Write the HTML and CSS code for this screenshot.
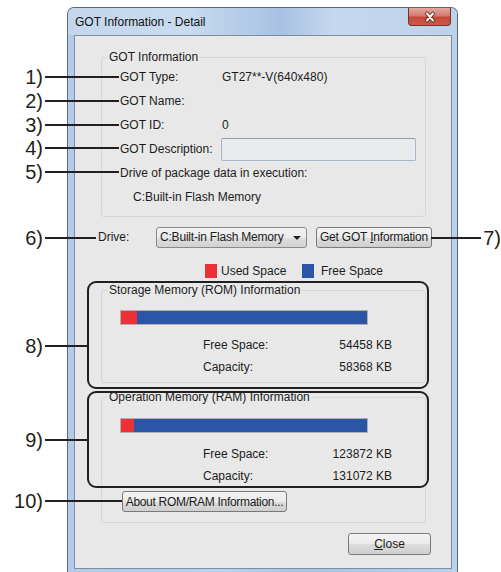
FILE: index.html
```html
<!DOCTYPE html>
<html lang="en">
<head>
    <meta charset="UTF-8">
    <title>GOT Information - Detail</title>
    <link rel="stylesheet" href="styles.css">
</head>
<body>
    <div class="window">
        <div class="titlebar">
            <span class="title">GOT Information - Detail</span>
            <span class="close-btn">
                <svg width="14" height="12" viewBox="0 0 14 12">
                    <path d="M4 2.5 L10 9.5 M10 2.5 L4 9.5" stroke="#5a2320" stroke-width="3.6" stroke-linecap="round"/>
                    <path d="M4 2.5 L10 9.5 M10 2.5 L4 9.5" stroke="#ffffff" stroke-width="2" stroke-linecap="round"/>
                </svg>
            </span>
        </div>
        <div class="client">
            <fieldset class="group">
                <legend>GOT Information</legend>
                <div class="group-body info">
                    <div class="row"><span class="key">GOT Type:</span><span>GT27**-V(640x480)</span></div>
                    <div class="row"><span class="key">GOT Name:</span></div>
                    <div class="row"><span class="key">GOT ID:</span><span>0</span></div>
                    <div class="row"><span class="key">GOT Description:</span><span class="textbox"></span></div>
                    <div class="row">Drive of package data in execution:</div>
                    <div class="row indent">C:Built-in Flash Memory</div>
                </div>
            </fieldset>

            <div class="drive-row">
                <span class="drive-label">Drive:</span>
                <span class="combo">C:Built-in Flash Memory<span class="arrow"></span></span>
                <button class="btn get-btn">Get GOT <u>I</u>nformation</button>
            </div>

            <div class="key-row">
                <span class="swatch used"></span><span class="key-text">Used Space</span>
                <span class="swatch free"></span><span>Free Space</span>
            </div>

            <fieldset class="group mem">
                <legend>Storage Memory (ROM) Information</legend>
                <div class="group-body rom">
                    <div class="bar"><div class="bar-used" style="width: 6.6%"></div></div>
                    <div class="mem-info">
                        <span>Free Space:</span><span class="num">54458 KB</span>
                        <span>Capacity:</span><span class="num">58368 KB</span>
                    </div>
                </div>
            </fieldset>

            <fieldset class="group mem ram-group">
                <legend>Operation Memory (RAM) Information</legend>
                <div class="group-body ram">
                    <div class="bar"><div class="bar-used" style="width: 5.3%"></div></div>
                    <div class="mem-info">
                        <span>Free Space:</span><span class="num">123872 KB</span>
                        <span>Capacity:</span><span class="num">131072 KB</span>
                    </div>
                    <button class="btn about-btn">About ROM/RAM Information...</button>
                </div>
            </fieldset>

            <div class="footer">
                <button class="btn close-dlg"><u>C</u>lose</button>
            </div>
        </div>
    </div>

    <!-- callouts drawn over the screenshot -->
    <div class="annot">
        <div class="ring ring-rom"></div>
        <div class="ring ring-ram"></div>

        <div class="callout c1"><span class="num-label">1)</span><span class="line"></span></div>
        <div class="callout c2"><span class="num-label">2)</span><span class="line"></span></div>
        <div class="callout c3"><span class="num-label">3)</span><span class="line"></span></div>
        <div class="callout c4"><span class="num-label">4)</span><span class="line"></span></div>
        <div class="callout c5"><span class="num-label">5)</span><span class="line"></span></div>
        <div class="callout c6"><span class="num-label">6)</span><span class="line"></span></div>
        <div class="callout c8"><span class="num-label">8)</span><span class="line"></span></div>
        <div class="callout c9"><span class="num-label">9)</span><span class="line"></span></div>
        <div class="callout c10"><span class="num-label">10)</span><span class="line"></span></div>
        <div class="callout c7"><span class="line"></span><span class="num-label">7)</span></div>
    </div>
</body>
</html>
```

FILE: styles.css
```css
html, body {
    margin: 0;
    padding: 0;
    overflow: hidden;
}
body {
    position: relative;
    width: 501px;
    height: 572px;
    background-color: #ffffff;
    font-family: "Liberation Sans", Arial, sans-serif;
    font-size: 12px;
    color: #1c1c1c;
}

/* window frame */
.window {
    margin: 7px 0 0 67px;
    width: 391px;
    height: 565px;
    box-sizing: border-box;
    border: 1px solid #56687e;
    border-bottom: none;
    border-radius: 7px 7px 0 0;
    padding: 0 5px 3px 6px;
    background: linear-gradient(90deg, #b3cbe8 0%, #bcd2ec 40%, #a9c3e2 60%, #bcd1ea 100%);
    display: flex;
    flex-direction: column;
}
.titlebar {
    height: 27px;
    flex-shrink: 0;
    display: flex;
    justify-content: space-between;
    align-items: flex-start;
    background: linear-gradient(90deg, #c3d6ec 0%, #c9dbef 30%, #b0c9e6 48%, #a7c1e1 55%, #c6d8ee 68%, #bcd1ea 100%);
    margin: 0 -5px 0 -6px;
    padding: 0 6px 0 7px;
    border-radius: 6px 6px 0 0;
}
.title {
    line-height: 28px;
    color: #101010;
}
.close-btn {
    width: 43px;
    height: 18px;
    box-sizing: border-box;
    border: 1px solid #7a302a;
    border-top: none;
    border-radius: 0 0 4px 4px;
    background: linear-gradient(#e4a89f 0%, #d37b6f 45%, #c3493a 55%, #cc5a48 100%);
    display: flex;
    justify-content: center;
    align-items: center;
}

.client {
    flex: 1;
    border: 1px solid #7d8ea3;
    background-color: #e8e8e8;
    padding: 14px 0 0 26px;
}

/* group boxes */
.group {
    width: 325px;
    box-sizing: border-box;
    margin: 0;
    padding: 0;
    border: 1px solid #d0d7dd;
    border-radius: 3px;
    min-width: 0;
}
.group legend {
    margin-left: 5px;
    padding: 0 2px;
    line-height: 14px;
}
.group-body {
    padding-left: 18px;
}
.info {
    padding-top: 1px;
    padding-bottom: 7px;
}
.row {
    display: flex;
    align-items: center;
    height: 24px;
}
.key {
    width: 102px;
}
.indent {
    padding-left: 13px;
}
.textbox {
    margin-left: -1px;
    width: 195px;
    height: 23px;
    box-sizing: border-box;
    border: 1px solid #a6b6c8;
    border-top-color: #8c9db2;
    border-radius: 2px;
    background-color: #e9eaeb;
}

/* drive selection */
.drive-row {
    display: flex;
    align-items: center;
    height: 22px;
    margin: 9px 0 0 -3px;
}
.drive-label {
    width: 58px;
}
.combo {
    position: relative;
    width: 151px;
    height: 21px;
    box-sizing: border-box;
    border: 1px solid #8a8a8a;
    border-radius: 3px;
    background: linear-gradient(#f2f2f2 0%, #ebebeb 50%, #dddddd 51%, #d2d2d2 100%);
    padding-left: 3px;
    line-height: 19px;
    letter-spacing: -0.2px;
}
.arrow {
    position: absolute;
    right: 5px;
    top: 8px;
    border-left: 4px solid transparent;
    border-right: 4px solid transparent;
    border-top: 4px solid #222222;
}
.btn {
    box-sizing: border-box;
    border: 1px solid #7a7a7a;
    border-radius: 3px;
    background: linear-gradient(#f3f3f3 0%, #ebebeb 50%, #dddddd 51%, #cfcfcf 100%);
    font-family: inherit;
    font-size: 12px;
    color: #1c1c1c;
    padding: 0;
    height: 21px;
    white-space: nowrap;
}
.get-btn {
    margin-left: 9px;
    width: 116px;
    letter-spacing: -0.2px;
}

/* colour key */
.key-row {
    display: flex;
    align-items: center;
    height: 16px;
    margin-top: 15px;
    padding-left: 104px;
}
.swatch {
    width: 12px;
    height: 14px;
}
.swatch.used {
    background-color: #ee3039;
    margin-right: 4px;
}
.swatch.free {
    background-color: #2b55a6;
    margin-right: 7px;
}
.key-text {
    width: 81px;
}

/* memory groups */
.mem {
    margin-top: 4px;
}
.ram-group {
    margin-top: 7px;
}
.rom {
    padding-top: 13px;
    padding-bottom: 4px;
}
.ram {
    padding-top: 14px;
    padding-bottom: 10px;
}
.bar {
    display: flex;
    width: 248px;
    height: 15px;
    box-sizing: border-box;
    border: 1px solid #b0b0b0;
    background-color: #2b55a6;
}
.bar-used {
    background-color: #ee3039;
}
.mem-info {
    display: grid;
    grid-template-columns: 1fr auto;
    grid-auto-rows: 22px;
    align-items: center;
    width: 189px;
    margin: 9px 0 0 83px;
}
.ram .mem-info {
    margin-top: 10px;
}
.num {
    text-align: right;
}
.about-btn {
    display: block;
    margin: 4px 0 0 2px;
    width: 165px;
    letter-spacing: -0.3px;
}

.footer {
    display: flex;
    justify-content: flex-end;
    padding-right: 20px;
    margin-top: 10px;
}
.close-dlg {
    width: 83px;
    height: 22px;
}

/* annotation layer */
.annot {
    position: absolute;
    left: 0;
    top: 0;
    width: 501px;
    height: 572px;
    pointer-events: none;
}
.ring {
    position: absolute;
    left: 87px;
    width: 342px;
    box-sizing: border-box;
    border: 2px solid #231f20;
    border-radius: 9px;
}
.ring-rom {
    top: 281px;
    height: 108px;
}
.ring-ram {
    top: 391px;
    height: 97px;
}
.callout {
    position: absolute;
    left: 0;
    height: 24px;
    display: flex;
    align-items: center;
}
.num-label {
    width: 43px;
    padding-right: 2px;
    text-align: right;
    font-size: 20px;
    line-height: 24px;
    color: #231f20;
}
.line {
    flex: 1;
    height: 2px;
    background-color: #231f20;
}
.c1 { top: 65px; width: 119px; }
.c2 { top: 89px; width: 119px; }
.c3 { top: 113px; width: 119px; }
.c4 { top: 136px; width: 119px; }
.c5 { top: 160px; width: 119px; }
.c6 { top: 226px; width: 96px; }
.c8 { top: 334px; width: 87px; }
.c9 { top: 428px; width: 87px; }
.c10 { top: 489px; width: 122px; }
.c7 {
    top: 226px;
    left: 431px;
    width: 70px;
}
.c7 .num-label {
    width: auto;
    padding: 0 0 0 2px;
    text-align: left;
}
```
